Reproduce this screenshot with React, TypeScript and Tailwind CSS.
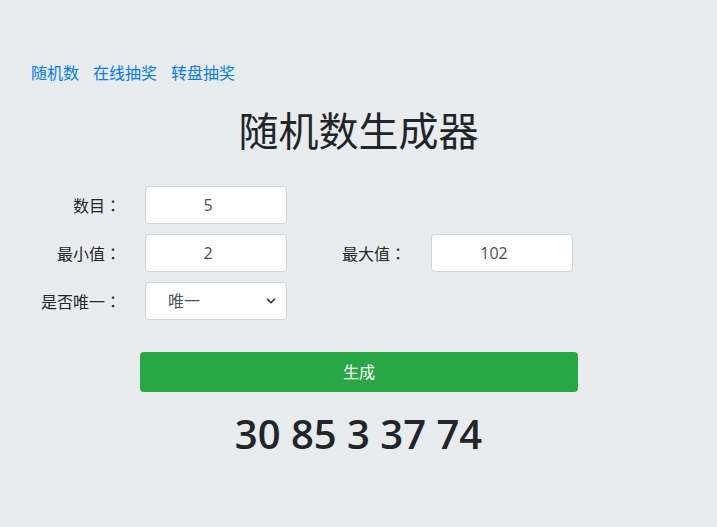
import { ChevronDown } from 'lucide-react'

const FONT = '"Open Sans", "Noto Sans CJK SC", sans-serif'

function Field({ value }: { value: string }) {
  return (
    <div className="flex h-[38px] w-[142px] items-center justify-center rounded border border-[#ced4da] bg-white pr-[16px] text-base text-[#495057]">
      {value}
    </div>
  )
}

function Label({ text, className }: { text: string; className: string }) {
  return (
    <span className={`shrink-0 whitespace-nowrap text-base leading-6 ${className}`}>
      {text}
      <span className="leading-6" style={{ fontFamily: '"Noto Sans CJK TC", sans-serif' }}>：</span>
    </span>
  )
}

export default function App() {
  return (
    <div className="min-h-[527px] w-full bg-[#e9ecef] text-[#212529]" style={{ fontFamily: FONT }}>
      <nav className="flex gap-[14px] pl-[31px] pt-[61px] text-base leading-6 text-[#007bff]">
        <a>随机数</a>
        <a>在线抽奖</a>
        <a>转盘抽奖</a>
      </nav>
      <h1 className="mt-[22px] text-center text-[40px] leading-[48px]">随机数生成器</h1>
      <div className="mt-[31px] flex flex-col gap-[10px]">
        <div className="flex h-[38px] items-center">
          <Label text="数目" className="w-[121px] text-right" />
          <div className="ml-[24px]"><Field value="5" /></div>
        </div>
        <div className="flex h-[38px] items-center">
          <Label text="最小值" className="w-[121px] text-right" />
          <div className="ml-[24px]"><Field value="2" /></div>
          <Label text="最大值" className="ml-[55px] w-[66px]" />
          <div className="ml-[23px]"><Field value="102" /></div>
        </div>
        <div className="flex h-[38px] items-center">
          <Label text="是否唯一" className="w-[121px] text-right" />
          <div className="relative ml-[24px] flex h-[38px] w-[142px] items-center rounded border border-[#ced4da] bg-white pl-[22px] text-base text-[#495057]">
            唯一
            <ChevronDown className="absolute right-[8px] h-[14px] w-[14px] text-[#343a40]" strokeWidth={3} />
          </div>
        </div>
      </div>
      <div className="mt-[32px] flex justify-center">
        <button className="ml-[1px] h-[40px] w-[438px] rounded bg-[#28a745] text-base text-white">生成</button>
      </div>
      <div className="mt-[16px] text-center text-[40px] font-semibold leading-[52px]">30 85 3 37 74</div>
    </div>
  )
}
